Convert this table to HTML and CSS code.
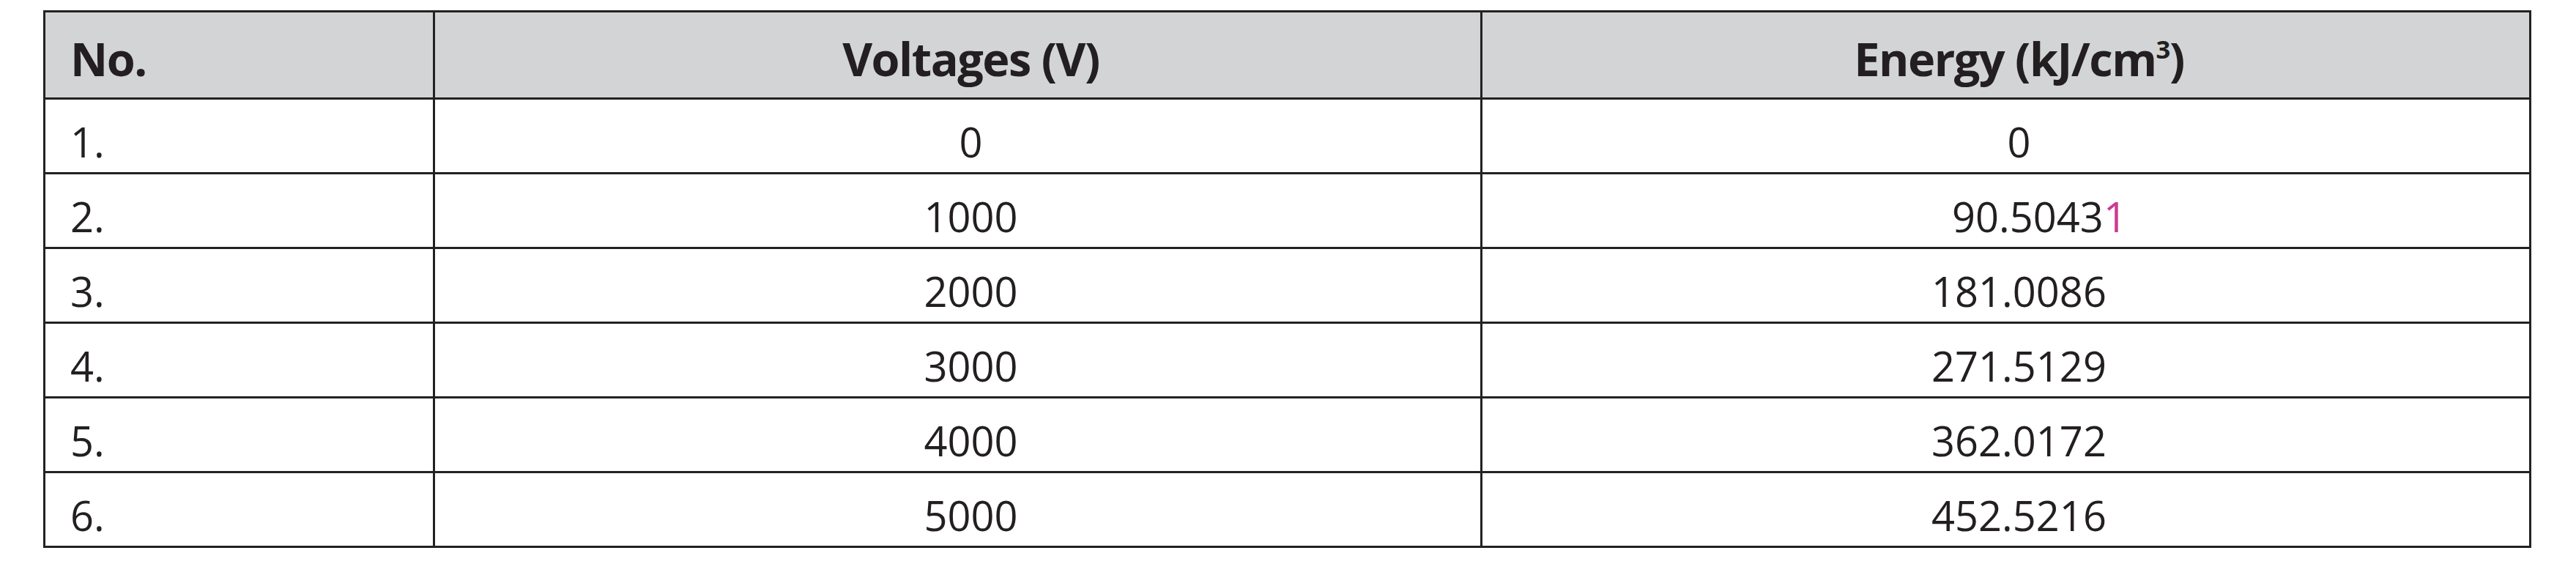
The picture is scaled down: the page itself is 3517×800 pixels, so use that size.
FILE: index.html
```html
<!DOCTYPE html>
<html lang="en">
<head>
<meta charset="utf-8">
<title>Table</title>
<link rel="stylesheet" href="styles.css">
</head>
<body>
<table class="data">
  <colgroup>
    <col class="c-no">
    <col class="c-volt">
    <col class="c-energy">
  </colgroup>
  <thead>
    <tr class="head">
      <th class="left">No.</th>
      <th class="mid">Voltages (V)</th>
      <th class="mid">Energy (kJ/cm<sup>3</sup>)</th>
    </tr>
  </thead>
  <tbody>
    <tr><td class="left">1.</td><td class="mid">0</td><td class="mid">0</td></tr>
    <tr><td class="left">2.</td><td class="mid">1000</td><td class="mid shift">90.5043<span class="pink">1</span></td></tr>
    <tr><td class="left">3.</td><td class="mid">2000</td><td class="mid">181.0086</td></tr>
    <tr><td class="left">4.</td><td class="mid">3000</td><td class="mid">271.5129</td></tr>
    <tr><td class="left">5.</td><td class="mid">4000</td><td class="mid">362.0172</td></tr>
    <tr><td class="left">6.</td><td class="mid">5000</td><td class="mid">452.5216</td></tr>
  </tbody>
</table>
</body>
</html>
```

FILE: styles.css
```css
html, body {
  margin: 0;
  padding: 0;
  background: #ffffff;
}

body {
  font-family: "Open Sans", "Noto Sans", "Liberation Sans", sans-serif;
  color: #231f20;
}

.data {
  border-collapse: collapse;
  table-layout: fixed;
  width: 3394px;
  margin: 14px 0 0 59px;
}

.c-no { width: 532px; }
.c-volt { width: 1430px; }
.c-energy { width: 1432px; }

.data th,
.data td {
  border: 3px solid #222222;
  padding: 0;
  white-space: nowrap;
}

.data th {
  height: 119px;
  background: #d3d4d6;
  font-weight: 700;
  font-size: 63px;
  letter-spacing: -1.5px;
  line-height: 1;
  padding-top: 8px;
  box-sizing: border-box;
}

.data td {
  height: 102px;
  font-size: 56px;
  line-height: 1;
  padding-top: 14px;
  box-sizing: border-box;
}

.data .left {
  text-align: left;
  padding-left: 34px;
}

.data .mid {
  text-align: center;
  padding-left: 36px;
}

.data .shift {
  padding-left: 92px;
}

sup {
  font-size: 0.55em;
  line-height: 0;
  vertical-align: 0.7em;
}

.pink {
  color: #cc3b8c;
}
```
